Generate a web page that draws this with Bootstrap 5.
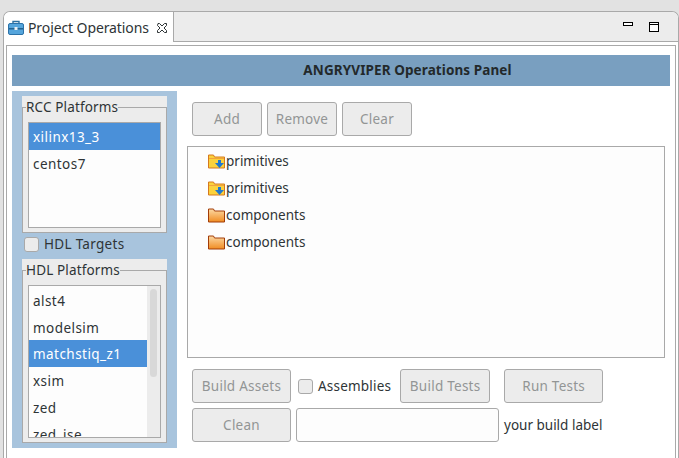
<!DOCTYPE html>
<html lang="en">
<head>
    <meta charset="UTF-8">
    <title>Project Operations</title>
    <link href="https://cdn.jsdelivr.net/npm/bootstrap@5.3.0/dist/css/bootstrap.min.css" rel="stylesheet">
    <style>
        html, body { height: 458px; overflow: hidden; }
        body {
            background: #e2e2e2;
            color: #2e3436;
            font-family: "Noto Sans", "DejaVu Sans", sans-serif;
            font-size: 13.5px;
            padding: 11px 0 0 3px;
        }
        .view-shell {
            height: 447px;
            background: #fff;
            border: 1px solid #a9a9a9;
            border-bottom: 0;
            border-radius: 7px 7px 0 0;
            overflow: hidden;
        }
        .tab-strip { height: 30px; }
        .view-tab {
            width: 170px;
            padding: 1px 6px 0 4px;
            background: #fff;
            border-right: 1px solid #a9a9a9;
            font-size: 14px;
        }
        .tab-name { margin-left: 4px; letter-spacing: -.1px; }
        .tab-filler {
            background: #ececec;
            border-bottom: 1px solid #a9a9a9;
            padding: 0 19px 0 0;
            gap: 16px;
        }
        .min-icon { margin-top: -5px; }
        .view-frame {
            height: 414px;
            margin: 3px 2px 0 2px;
            padding: 9px 5px 0 5px;
            border: 1px solid #a9a9a9;
            border-bottom: 0;
        }
        .panel-title {
            height: 31px;
            background: #799fc0;
            color: #23292b;
            font-weight: 700;
            font-size: 13.5px;
            letter-spacing: .1px;
            padding-left: 133px;
        }
        .body-row { margin-top: 5px; height: 357px; }
        .side-panel {
            width: 165px;
            background: #a8c4dd;
            padding: 5px 10px;
        }
        .plat-group {
            background: #ececec;
            position: relative;
            padding: 11px 0 0 0;
        }
        .plat-inner {
            border: 1px solid #a9a9a9;
            padding: 14px 5px 4px 5px;
            height: 100%;
        }
        .plat-label {
            position: absolute;
            left: 4px;
            top: 3px;
            background: #ececec;
            line-height: 16px;
            letter-spacing: .15px;
        }
        .plat-group-rcc { height: 137px; }
        .plat-group-hdl { height: 184px; }
        .plat-list {
            background: #fdfdfd;
            border: 1px solid #a9a9a9;
            border-radius: 0;
            height: 100%;
            overflow: hidden;
            flex-wrap: nowrap;
        }
        .plat-list .list-group-item {
            background: transparent;
            border: 0;
            color: #2e3436;
            border-radius: 0;
            padding: 0 4px;
            height: 27px;
            line-height: 29px;
            flex-shrink: 0;
            letter-spacing: .45px;
        }
        .plat-list .list-group-item.active { background: #4a90d9; color: #fff; }
        .hdl-scroll { padding-top: 1px; }
        .hdl-track {
            width: 13px;
            background: #ececec;
            padding: 3px 3px;
        }
        .hdl-thumb { width: 7px; height: 88px; background: #d8d8d8; border-radius: 4px; }
        .hdl-targets { height: 26px; padding: 0 0 4px 2px; gap: 5px; letter-spacing: .3px; }
        .eclipse-check.form-check-input {
            width: 15px;
            height: 15px;
            margin: 0;
            background-color: #ececec;
            border: 1px solid #a9a9a9;
            border-radius: 3px;
        }
        .work-area { padding: 11px 0 0 15px; }
        .btn-line { gap: 5px; }
        .gray-btn.btn {
            --bs-btn-disabled-opacity: 1;
            --bs-btn-disabled-bg: #ececec;
            --bs-btn-disabled-border-color: #a9a9a9;
            --bs-btn-disabled-color: #929595;
            height: 34px;
            padding: 0;
            font-size: 13.5px;
            letter-spacing: .25px;
            border-radius: 3px;
        }
        .btn-small { width: 70px; }
        .btn-wide { width: 99px; }
        .btn-mid { width: 90px; }
        .tree-box {
            height: 212px;
            margin: 10px 5px 0 -5px;
            background: #fdfdfd;
            border: 1px solid #a9a9a9;
            padding: 1px 0 0 20px;
        }
        .tree-row { height: 27px; line-height: 27px; gap: 1px; }
        .tree-row svg { flex: none; }
        .build-row { margin-top: 11px; height: 34px; }
        .label-row { margin-top: 5px; height: 34px; gap: 5px; }
        .assemblies-check { margin-left: 7px !important; }
        .assemblies-text { margin-left: 5px; letter-spacing: .2px; }
        .tests-btn { margin-left: 9px; }
        .run-btn { margin-left: 14px; }
        .build-input.form-control {
            width: 203px;
            height: 34px;
            background: #fdfdfd;
            border-color: #a9a9a9;
            border-radius: 3px;
        }
    </style>
</head>
<body>
    <div class="view-shell">
        <!-- Tab strip -->
        <div class="tab-strip d-flex">
            <div class="view-tab d-flex align-items-center">
                <svg width="16" height="15" viewBox="0 0 16 15">
                    <path d="M5 4V1.500h6V4" fill="none" stroke="#2c6f9f" stroke-width="1.4"/>
                    <rect x="0.5" y="3.500" width="15" height="11" rx="1.5" fill="#55a5dc" stroke="#2c72a8"/>
                    <rect x="1" y="8" width="14" height="1.5" fill="#24628f"/>
                    <rect x="6.500" y="7" width="3" height="3" fill="#e8eef2"/>
                </svg>
                <span class="tab-name flex-grow-1">Project Operations</span>
                <svg width="10" height="10" viewBox="0 0 10 10">
                    <path d="M1 .5h1.500L5 3 7.500.5H9.500v2L7 5l2.500 2.500v2H7.500L5 7 2.500 9.500H.5v-2L3 5 .5 2.500z" fill="#fff" stroke="#2e3436" stroke-width="1"/>
                </svg>
            </div>
            <div class="tab-filler flex-grow-1 d-flex justify-content-end align-items-center">
                <svg class="min-icon" width="10" height="4" viewBox="0 0 10 4"><rect x=".5" y=".5" width="9" height="3" fill="#fff" stroke="#000"/></svg>
                <svg width="10" height="10" viewBox="0 0 10 10"><rect x=".5" y=".5" width="9" height="9" fill="#fff" stroke="#000"/><path d="M0 2.500h10" stroke="#000"/></svg>
            </div>
        </div>

        <div class="view-frame">
            <div class="panel-title d-flex align-items-center justify-content-center">ANGRYVIPER Operations Panel</div>

            <div class="body-row d-flex">
                <!-- Platform lists -->
                <div class="side-panel flex-shrink-0">
                    <div class="plat-group plat-group-rcc">
                        <span class="plat-label">RCC Platforms</span>
                        <div class="plat-inner">
                            <div class="plat-list list-group">
                                <div class="list-group-item active">xilinx13_3</div>
                                <div class="list-group-item">centos7</div>
                            </div>
                        </div>
                    </div>
                    <div class="hdl-targets d-flex align-items-center">
                        <input class="eclipse-check form-check-input" type="checkbox">
                        <span>HDL Targets</span>
                    </div>
                    <div class="plat-group plat-group-hdl">
                        <span class="plat-label">HDL Platforms</span>
                        <div class="plat-inner">
                            <div class="plat-list d-flex flex-row">
                                <div class="hdl-scroll list-group flex-grow-1">
                                    <div class="list-group-item">alst4</div>
                                    <div class="list-group-item">modelsim</div>
                                    <div class="list-group-item active">matchstiq_z1</div>
                                    <div class="list-group-item">xsim</div>
                                    <div class="list-group-item">zed</div>
                                    <div class="list-group-item">zed_ise</div>
                                </div>
                                <div class="hdl-track flex-shrink-0"><div class="hdl-thumb"></div></div>
                            </div>
                        </div>
                    </div>
                </div>

                <!-- Assets -->
                <div class="work-area flex-grow-1">
                    <div class="btn-line d-flex">
                        <button class="gray-btn btn btn-small" disabled>Add</button>
                        <button class="gray-btn btn btn-small" disabled>Remove</button>
                        <button class="gray-btn btn btn-small" disabled>Clear</button>
                    </div>
                    <div class="tree-box">
                        <div class="tree-row d-flex align-items-center">
                            <svg width="17" height="15" viewBox="0 0 17 15"><path d="M.5 14V1h5l1 2h10v11z" fill="#fbd23c" stroke="#d5791f"/><path d="M1 4.500h15" stroke="#f2a33c"/><path d="M7 9h3V6h3v3h3l-4.500 5z" fill="#1f78cf"/></svg>
                            <span>primitives</span>
                        </div>
                        <div class="tree-row d-flex align-items-center">
                            <svg width="17" height="15" viewBox="0 0 17 15"><path d="M.5 14V1h5l1 2h10v11z" fill="#fbd23c" stroke="#d5791f"/><path d="M1 4.500h15" stroke="#f2a33c"/><path d="M7 9h3V6h3v3h3l-4.500 5z" fill="#1f78cf"/></svg>
                            <span>primitives</span>
                        </div>
                        <div class="tree-row d-flex align-items-center">
                            <svg width="17" height="15" viewBox="0 0 17 15"><defs><linearGradient id="fo" x1="0" y1="0" x2="0" y2="1"><stop offset="0" stop-color="#fcd9a4"/><stop offset="1" stop-color="#f08c22"/></linearGradient></defs><path d="M.5 14V1h5l1 2h10v11z" fill="url(#fo)" stroke="#a23c08"/></svg>
                            <span>components</span>
                        </div>
                        <div class="tree-row d-flex align-items-center">
                            <svg width="17" height="15" viewBox="0 0 17 15"><path d="M.5 14V1h5l1 2h10v11z" fill="url(#fo)" stroke="#a23c08"/></svg>
                            <span>components</span>
                        </div>
                    </div>
                    <div class="build-row d-flex align-items-center">
                        <button class="gray-btn btn btn-wide" disabled>Build Assets</button>
                        <input class="eclipse-check assemblies-check form-check-input" type="checkbox">
                        <span class="assemblies-text">Assemblies</span>
                        <button class="gray-btn btn btn-mid tests-btn" disabled>Build Tests</button>
                        <button class="gray-btn btn btn-wide run-btn" disabled>Run Tests</button>
                    </div>
                    <div class="label-row d-flex align-items-center">
                        <button class="gray-btn btn btn-wide" disabled>Clean</button>
                        <input class="build-input form-control" type="text">
                        <span>your build label</span>
                    </div>
                </div>
            </div>
        </div>
    </div>
    <script src="https://cdn.jsdelivr.net/npm/bootstrap@5.3.0/dist/js/bootstrap.bundle.min.js"></script>
</body>
</html>
